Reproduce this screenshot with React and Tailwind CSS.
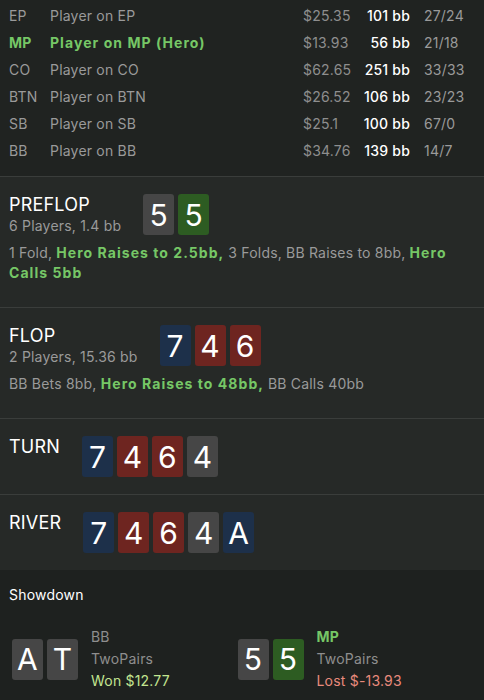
import React from "react";

const CARD_BG = {
  g: "bg-[#464646]",
  s: "bg-[#2d5c22]",
  b: "bg-[#1d304a]",
  r: "bg-[#6e2520]",
};

function Card({ v, c }) {
  return (
    <div
      className={`${CARD_BG[c]} w-[31px] h-[41px] rounded-[3px] flex items-center justify-center text-[30px] leading-none text-white`}
    >
      {v}
    </div>
  );
}

function Cards({ cards }) {
  return (
    <div className="flex gap-[4px]">
      {cards.map(([v, c], i) => (
        <Card key={i} v={v} c={c} />
      ))}
    </div>
  );
}

const players = [
  ["EP", "Player on EP", "$25.35", "101 bb", "27/24", false],
  ["MP", "Player on MP (Hero)", "$13.93", "56 bb", "21/18", true],
  ["CO", "Player on CO", "$62.65", "251 bb", "33/33", false],
  ["BTN", "Player on BTN", "$26.52", "106 bb", "23/23", false],
  ["SB", "Player on SB", "$25.1", "100 bb", "67/0", false],
  ["BB", "Player on BB", "$34.76", "139 bb", "14/7", false],
];

const G = "font-bold text-[#76c766] tracking-[1.05px]";
const N = "text-[#9a9a9a]";

function Street({ title, sub, cards, children }) {
  return (
    <section className="border-t border-[#3a3d3b] bg-[#262927] px-[9px] pt-[17px] pb-[17px]">
      <div className="flex items-start gap-[22px]">
        <div>
          <div className="text-[18px] leading-[22px] text-white">{title}</div>
          {sub && <div className="text-[14px] leading-[20px] text-[#9a9a9a]">{sub}</div>}
        </div>
        <Cards cards={cards} />
      </div>
      {children && (
        <div className="mt-[7px] mb-[7px] text-[14px] leading-[20px] pr-[9px]">{children}</div>
      )}
    </section>
  );
}

function ShowPlayer({ cards, pos, hero, hand, result, won }) {
  return (
    <div className="flex items-center gap-[13px]">
      <Cards cards={cards} />
      <div className="text-[14px] leading-[22px]">
        <div className={hero ? "font-bold text-[#76c766]" : "text-[#8e8e8e]"}>{pos}</div>
        <div className="text-[#8e8e8e]">{hand}</div>
        <div className={won ? "text-[#c3e590]" : "text-[#e88a7c]"}>{result}</div>
      </div>
    </div>
  );
}

export default function App() {
  return (
    <div
      className="w-[484px] h-[700px] overflow-hidden bg-[#202321] tracking-[0.2px]"
      style={{ fontFamily: "Inter, 'Noto Sans', sans-serif" }}
    >
      <div className="pt-[2px] pb-[12px] bg-[#202321]">
        {players.map(([pos, name, usd, bb, stat, hero]) => (
          <div key={pos} className="flex items-center h-[27px] pl-[9px] text-[14px]">
            <div className={`w-[41px] ${hero ? "font-bold text-[#76c766]" : "text-[#9a9a9a]"}`}>{pos}</div>
            <div className={`flex-1 ${hero ? "font-bold text-[#76c766] tracking-[1.05px]" : "text-[#9a9a9a]"}`}>{name}</div>
            <div className="w-[50px] text-[#8e8e8e]">{usd}</div>
            <div className="w-[57px] text-right font-medium text-white">{bb}</div>
            <div className="w-[74px] pl-[14px] text-[#9a9a9a]">{stat}</div>
          </div>
        ))}
      </div>

      <Street title="PREFLOP" sub="6 Players, 1.4 bb" cards={[["5", "g"], ["5", "s"]]}>
        <span className={N}>1 Fold, </span>
        <span className={G}>Hero Raises to 2.5bb, </span>
        <span className={N}>3 Folds, BB Raises to 8bb, </span>
        <span className={G}>Hero Calls 5bb</span>
      </Street>

      <Street title="FLOP" sub="2 Players, 15.36 bb" cards={[["7", "b"], ["4", "r"], ["6", "r"]]}>
        <span className={N}>BB Bets 8bb, </span>
        <span className={G}>Hero Raises to 48bb, </span>
        <span className={N}>BB Calls 40bb</span>
      </Street>

      <Street title="TURN" cards={[["7", "b"], ["4", "r"], ["6", "r"], ["4", "g"]]} />

      <Street title="RIVER" cards={[["7", "b"], ["4", "r"], ["6", "r"], ["4", "g"], ["A", "b"]]} />

      <section className="bg-[#1e211f] px-[9px] pt-[15px] h-full">
        <div className="text-[14px] leading-[20px] text-white">Showdown</div>
        <div className="grid grid-cols-2 mt-[21px] pl-[3px] pr-[12px]">
          <ShowPlayer cards={[["A", "g"], ["T", "g"]]} pos="BB" hand="TwoPairs" result="Won $12.77" won />
          <ShowPlayer cards={[["5", "g"], ["5", "s"]]} pos="MP" hero hand="TwoPairs" result="Lost $-13.93" />
        </div>
      </section>
    </div>
  );
}
